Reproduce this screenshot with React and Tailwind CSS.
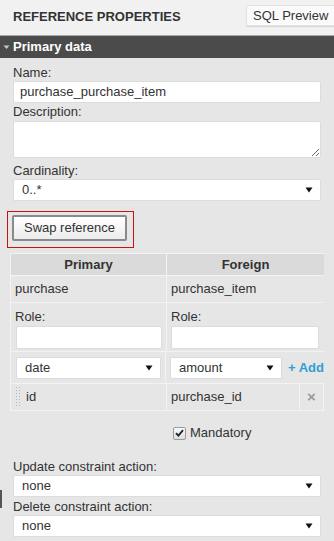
import React from "react";

function Select({ value, className = "" }) {
  return (
    <div
      className={`flex h-[22px] items-center justify-between rounded-[2px] border border-[#dcdcdc] bg-white pl-[8px] pr-[7px] text-[13px] text-[#333] ${className}`}
    >
      <span className="leading-[16px]">{value}</span>
      <svg width="8" height="6" viewBox="0 0 8 6" className="shrink-0">
        <path d="M0.5 0.5 L7.5 0.5 L4 5.5 Z" fill="#111" />
      </svg>
    </div>
  );
}

function Input({ value = "", className = "" }) {
  return (
    <div
      className={`flex h-[22px] items-center rounded-[2px] border border-[#dcdcdc] bg-white pl-[6px] text-[13px] text-[#333] ${className}`}
    >
      <span className="leading-[16px]">{value}</span>
    </div>
  );
}

function Label({ children, className = "" }) {
  return <div className={`h-[16px] text-[13px] leading-[16px] text-[#333] ${className}`}>{children}</div>;
}

export default function App() {
  return (
    <div className="relative h-[541px] w-[334px] overflow-hidden bg-[#e6e6e6] font-['Liberation_Sans',Arial,sans-serif] text-[#333]">
      {/* header */}
      <div className="flex h-[35px] items-start bg-[#f1f1f1] pl-[13px]">
        <div className="pt-[9px] text-[13px] font-bold leading-[16px] text-[#333]">REFERENCE PROPERTIES</div>
        <div className="ml-auto mt-[5px] flex h-[21px] w-[92px] shrink-0 items-center rounded-[2px] border border-[#e2e2e2] bg-[#fafafa] pl-[6px] text-[13px] leading-[16px] text-[#333] shadow-[0_1px_1px_rgba(0,0,0,0.12)] -mr-[4px]">
          SQL Preview
        </div>
      </div>
      <div className="h-px bg-[#a8a8a8]" />
      <div className="flex h-[22px] items-center bg-[#4b4b4b] pl-[3px]">
        <svg width="7" height="5" viewBox="0 0 7 5" className="mr-[3px] mt-[1px]">
          <path d="M0.5 0.5 L6.5 0.5 L3.5 4 Z" fill="#c8c8c8" />
        </svg>
        <span className="text-[13px] font-bold leading-[16px] text-white">Primary data</span>
      </div>

      {/* content */}
      <div className="px-[13px] pt-[7px]">
        <Label>Name:</Label>
        <Input value="purchase_purchase_item" className="h-[22px]" />
        <Label className="mt-[1px]">Description:</Label>
        <textarea
          readOnly
          className="mt-[1px] block h-[37px] w-full rounded-[2px] border border-[#dcdcdc] bg-white"
        />
        <Label className="mt-[5px]">Cardinality:</Label>
        <Select value="0..*" />

        {/* swap */}
        <div className="-ml-[6px] mt-[10px] w-[127px] bg-[#cc1111] p-px">
          <div className="bg-[#e6e6e6] pb-[6px] pl-[4px] pt-[3px]">
            <div className="flex h-[26px] w-[115px] items-center justify-center rounded-[2px] border-2 border-[#8a8a8a] bg-gradient-to-b from-white to-[#ececec] text-[13px] leading-[16px] text-[#333]">
              Swap reference
            </div>
          </div>
        </div>

        {/* table */}
        <div className="-mx-[3px] mt-[5px] border-l border-t border-[#f3f3f3] text-[13px] leading-[16px]">
          <div className="flex h-[21px] bg-[#dadada] font-bold">
            <div className="flex w-[156px] items-center justify-center border-r border-[#f3f3f3]">Primary</div>
            <div className="flex flex-1 items-center justify-center">Foreign</div>
          </div>
          <div className="flex h-[27px] border-t border-[#f3f3f3]">
            <div className="flex w-[156px] items-center border-r border-[#f3f3f3] pl-[4px]">purchase</div>
            <div className="flex flex-1 items-center pl-[4px]">purchase_item</div>
          </div>
          <div className="flex h-[49px] border-t border-[#f3f3f3]">
            <div className="w-[156px] border-r border-[#f3f3f3] pl-[4px] pr-[4px] pt-[6px]">
              <Label>Role:</Label>
              <Input className="ml-px mt-[1px] h-[23px]" />
            </div>
            <div className="flex-1 pl-[4px] pr-[5px] pt-[6px]">
              <Label>Role:</Label>
              <Input className="mt-[1px] h-[23px]" />
            </div>
          </div>
          <div className="flex h-[32px] items-center border-t border-[#f3f3f3]">
            <div className="flex h-full w-[156px] items-center border-r border-[#f3f3f3] pl-[5px] pr-[4px]">
              <Select value="date" className="w-full" />
            </div>
            <div className="flex flex-1 items-center whitespace-nowrap pl-[4px]">
              <Select value="amount" className="w-[112px] shrink-0" />
              <span className="ml-[6px] shrink-0 font-bold text-[#2d9fd3]">+ Add</span>
            </div>
          </div>
          <div className="flex h-[28px] border-t border-[#f3f3f3]">
            <div className="flex w-[156px] items-center border-r border-b border-[#f3f3f3] pl-[4px]">
              <svg width="5" height="22" viewBox="0 0 5 22" className="ml-px mr-[5px]">
                {[1, 4, 7, 10, 13, 16, 19].map((y) => (
                  <g key={y}>
                    <rect x="0" y={y} width="1" height="1" fill="#b5b5b5" />
                    <rect x="3" y={y} width="1" height="1" fill="#b5b5b5" />
                  </g>
                ))}
              </svg>
              <span>id</span>
            </div>
            <div className="flex w-[133px] items-center border-r border-b border-[#f3f3f3] pl-[4px]">purchase_id</div>
            <div className="flex flex-1 items-center justify-center border-r border-b border-[#f3f3f3] text-[15px] font-bold text-[#9a9a9a]">
              ×
            </div>
          </div>
        </div>

        {/* mandatory */}
        <div className="mt-[14px] flex items-center pl-[160px]">
          <div className="flex h-[13px] w-[13px] items-center justify-center rounded-[2px] border border-[#9a9a9a] bg-gradient-to-b from-[#fafafa] to-[#dedede]">
            <svg width="9" height="8" viewBox="0 0 9 8">
              <path d="M1 4.2 L3.4 6.6 L8 1.2" stroke="#222" strokeWidth="1.8" fill="none" />
            </svg>
          </div>
          <span className="ml-[4px] text-[13px] leading-[16px]">Mandatory</span>
        </div>

        <Label className="mt-[18px]">Update constraint action:</Label>
        <Select value="none" />
        <Label className="mt-[2px]">Delete constraint action:</Label>
        <Select value="none" />
      </div>

      <div className="absolute left-0 top-[490px] h-[18px] w-[2px] bg-[#555]" />
    </div>
  );
}
